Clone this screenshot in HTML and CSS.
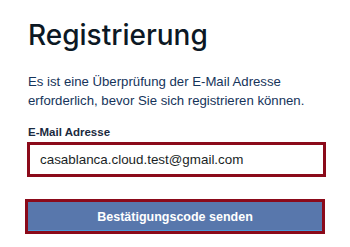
FILE: index.html
```html
<!DOCTYPE html>
<html>
<head>
    <title>Registrierung</title>
    <link rel="stylesheet" href="styles.css">
</head>
<body>
    <div class="container">
        <h1>Registrierung</h1>
        <p class="intro">Es ist eine Überprüfung der E-Mail Adresse erforderlich, bevor Sie sich registrieren können.</p>
        <div class="input-group">
            <label for="email">E-Mail Adresse</label>
            <input type="text" id="email" value="casablanca.cloud.test@gmail.com">
        </div>
        <button class="send-button">Bestätigungscode senden</button>
    </div>
</body>
</html>
```

FILE: styles.css
```css
body {
    margin: 0;
    font-family: "Liberation Sans", Arial, sans-serif;
    background: #fff;
}
.container {
    padding: 18px 24px 0 28px;
}
h1 {
    font-family: Inter, "Liberation Sans", sans-serif;
    font-size: 28px;
    font-weight: 500;
    line-height: 34px;
    color: #0c1824;
    margin: 0 0 20px 0;
}
.intro {
    font-size: 13.2px;
    line-height: 19px;
    color: #15345a;
    margin: 0 0 16px 0;
}
.input-group label {
    display: block;
    font-size: 11.5px;
    font-weight: bold;
    color: #1a2a40;
    margin-bottom: 4px;
}
.input-group input {
    box-sizing: border-box;
    width: 299px;
    height: 35px;
    margin-left: -1px;
    padding: 0 10px;
    border: 3px solid #8b0a1a;
    font-family: "Liberation Sans", Arial, sans-serif;
    font-size: 13.4px;
    color: #1a1f26;
    outline: none;
}
.send-button {
    display: block;
    box-sizing: border-box;
    width: 300px;
    height: 35px;
    margin: 22px 0 0 -3px;
    border: 3px solid #8b0a1a;
    background: #5877ac;
    box-shadow: inset 0 -1px 0 #4c9ad8;
    color: #fff;
    font-family: "Liberation Sans", Arial, sans-serif;
    font-size: 12.5px;
    font-weight: bold;
}
```
